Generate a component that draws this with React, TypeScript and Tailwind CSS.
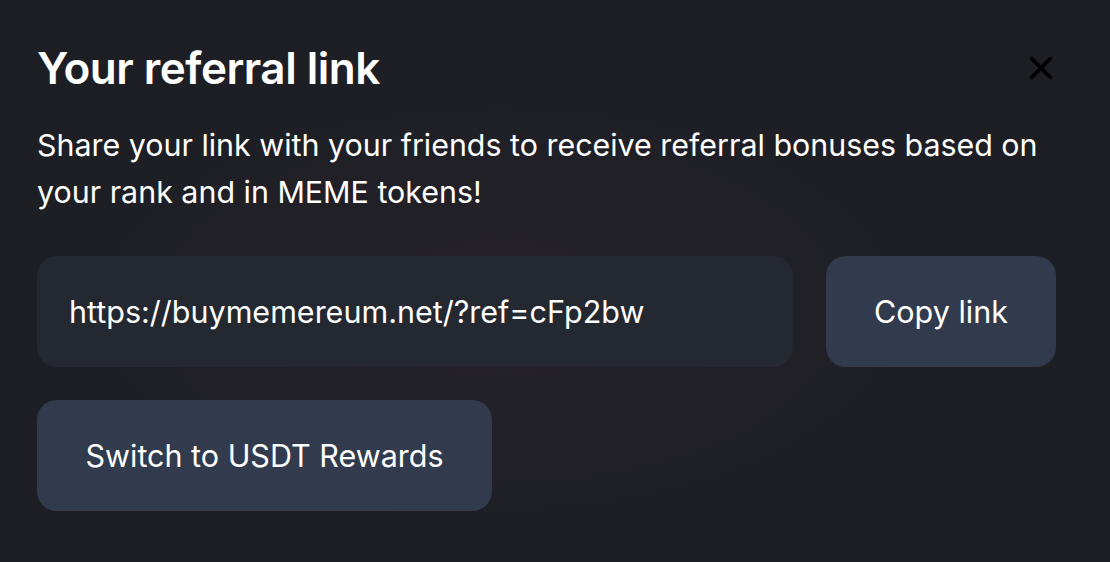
import { X } from 'lucide-react';

export default function App() {
  return (
    <div
      className="w-[1110px] h-[562px] overflow-hidden bg-[#1c1e24] bg-[radial-gradient(ellipse_at_45%_55%,#262229_0%,#1d1f25_55%,#1c1e24_100%)] text-white"
      style={{ fontFamily: 'Inter, "Noto Sans", sans-serif' }}
    >
      <div className="pl-[37px] pr-[54px] pt-[40px]">
        {/* Header */}
        <div className="flex items-center justify-between">
          <h1 className="text-[44px] leading-[56px] font-semibold tracking-[-0.5px]">Your referral link</h1>
          <button className="text-black -mr-[4px]">
            <X size={38} strokeWidth={2.2} />
          </button>
        </div>

        <p className="mt-[26px] text-[30.4px] leading-[47px] text-white">
          Share your link with your friends to receive referral bonuses based on your rank and in MEME tokens!
        </p>

        {/* Link row */}
        <div className="mt-[40px] flex gap-[33px]">
          <div className="flex-1 h-[111px] rounded-[20px] bg-[#232831] flex items-center px-[32px] text-[30.5px]">
            https://buymemereum.net/?ref=cFp2bw
          </div>
          <button className="w-[230px] h-[111px] rounded-[20px] bg-[#323b4e] text-[30.5px]">Copy link</button>
        </div>

        <button className="mt-[33px] w-[455px] h-[111px] rounded-[20px] bg-[#323b4e] text-[30.5px]">
          Switch to USDT Rewards
        </button>
      </div>
    </div>
  );
}
